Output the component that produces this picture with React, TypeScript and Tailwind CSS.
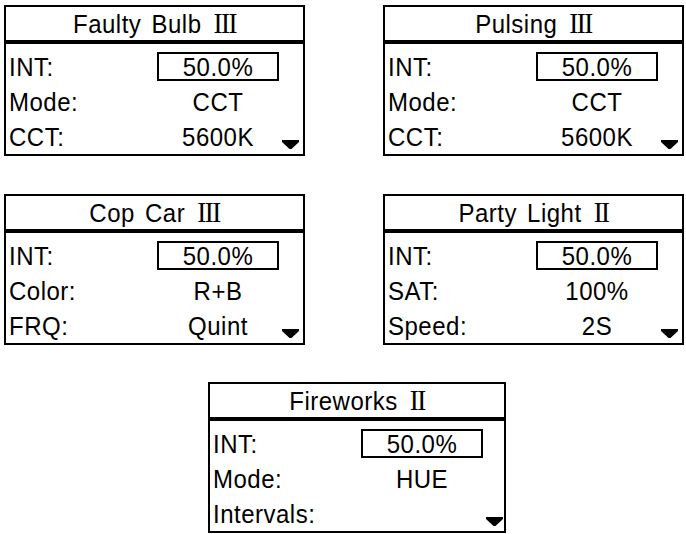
import React from "react";

type Row = { label: string; value: string; boxed?: boolean };
type PanelProps = { title: string; numeral: string; rows: Row[]; width?: string };

function Arrow() {
  return (
    <svg width="17" height="9" viewBox="0 0 17 9" className="block">
      <polygon points="0,0 17,0 17,2 9.5,9 7.5,9 0,2" fill="#000" />
    </svg>
  );
}

function T({ children }: { children: React.ReactNode }) {
  return <span className="inline-block scale-y-110 tracking-[0.5px]">{children}</span>;
}

function Panel({ title, numeral, rows, width = "w-[301px]" }: PanelProps) {
  return (
    <div className={`${width} h-[151px] border-2 border-black bg-white flex flex-col text-black`}>
      <div className="h-[34px] flex items-center justify-center text-[24px] leading-none [word-spacing:3px]">
        <T>{title}</T>
        <span className="ml-[12px] inline-block font-['Liberation_Serif',serif] text-[27px] tracking-[-1.5px] scale-y-110">
          {numeral}
        </span>
      </div>
      <div className="h-[4px] bg-black" />
      <div className="flex flex-col pt-[5px]">
        {rows.map((r, i) => (
          <div key={i} className="h-[35px] flex items-center pl-[3px]">
            <div className="w-[148px] text-[24px] leading-none">
              <T>{r.label}</T>
            </div>
            <div
              className={`w-[122px] h-[29px] flex items-center justify-center text-[24px] leading-none ${
                r.boxed ? "border-2 border-black" : ""
              }`}
            >
              <T>{r.value}</T>
            </div>
            {i === rows.length - 1 && (
              <div className="ml-[3px] self-end mb-[5px]">
                <Arrow />
              </div>
            )}
          </div>
        ))}
      </div>
    </div>
  );
}

export default function App() {
  return (
    <div className="w-[686px] h-[534px] bg-white font-['Liberation_Sans',Arial,sans-serif] pt-[5px] pl-[4px] flex flex-col">
      <div className="flex gap-[78px]">
        <Panel
          title="Faulty Bulb"
          numeral="III"
          rows={[
            { label: "INT:", value: "50.0%", boxed: true },
            { label: "Mode:", value: "CCT" },
            { label: "CCT:", value: "5600K" },
          ]}
        />
        <Panel
          title="Pulsing"
          numeral="III"
          rows={[
            { label: "INT:", value: "50.0%", boxed: true },
            { label: "Mode:", value: "CCT" },
            { label: "CCT:", value: "5600K" },
          ]}
        />
      </div>
      <div className="flex gap-[78px] mt-[38px]">
        <Panel
          title="Cop Car"
          numeral="III"
          rows={[
            { label: "INT:", value: "50.0%", boxed: true },
            { label: "Color:", value: "R+B" },
            { label: "FRQ:", value: "Quint" },
          ]}
        />
        <Panel
          title="Party Light"
          numeral="II"
          rows={[
            { label: "INT:", value: "50.0%", boxed: true },
            { label: "SAT:", value: "100%" },
            { label: "Speed:", value: "2S" },
          ]}
        />
      </div>
      <div className="flex mt-[37px] pl-[204px]">
        <Panel
          title="Fireworks"
          numeral="II"
          width="w-[298px]"
          rows={[
            { label: "INT:", value: "50.0%", boxed: true },
            { label: "Mode:", value: "HUE" },
            { label: "Intervals:", value: "" },
          ]}
        />
      </div>
    </div>
  );
}
